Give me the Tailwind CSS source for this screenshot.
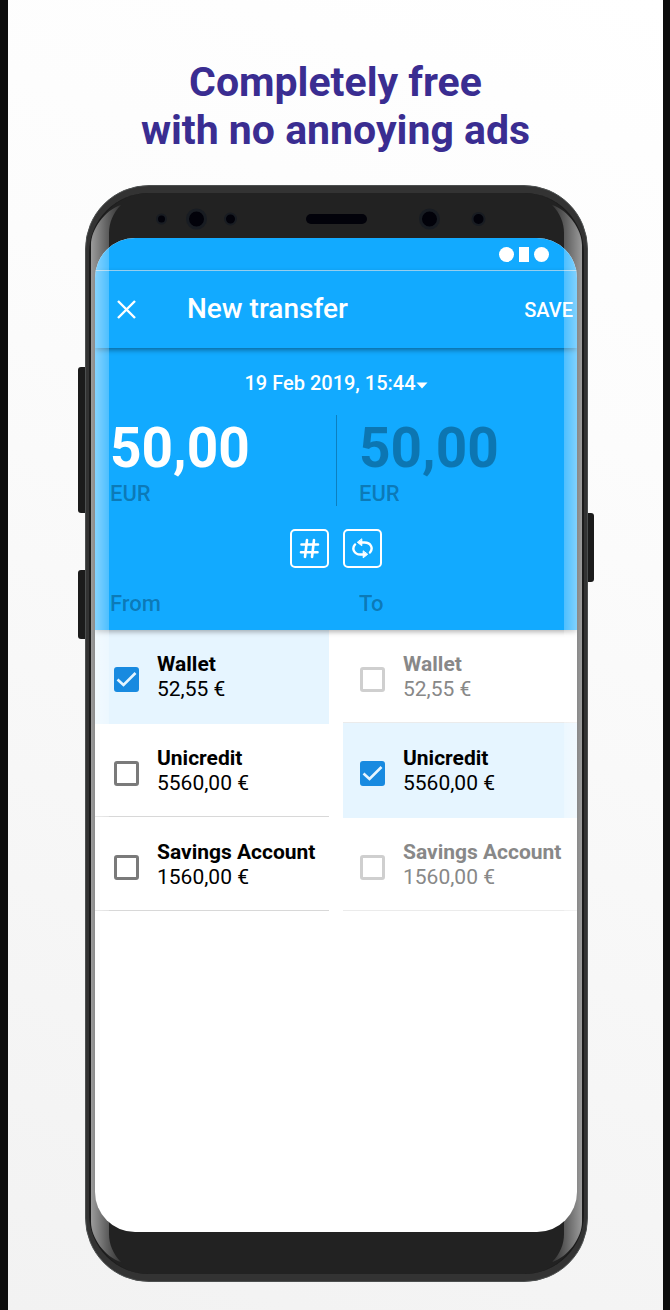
<!DOCTYPE html>
<html lang="en">
<head>
<meta charset="utf-8">
<meta name="viewport" content="width=device-width, initial-scale=1">
<title>New transfer</title>
<script src="https://cdn.jsdelivr.net/npm/@tailwindcss/browser@4"></script>
</head>
<body class="font-['Roboto',sans-serif] bg-[#0d0d0d]">
<main class="min-h-screen ml-2 mr-[7px] pt-[58px] pb-7 bg-[linear-gradient(200deg,#ffffff,#fcfcfc_30%,#f2f2f2)]">
  <h1 class="text-center text-[41px] leading-[48px] font-bold text-[#3a2d91]">Completely free<br>with no annoying ads</h1>

  <div class="relative ml-[77px] mr-[75px] mt-[31px]">
    <!-- side keys -->
    <span class="absolute -left-[7px] top-[182px] w-3 h-[146px] rounded-[3px] bg-[#1b1b1b]"></span>
    <span class="absolute -left-[7px] top-[385px] w-3 h-[69px] rounded-[3px] bg-[#1b1b1b]"></span>
    <span class="absolute -right-[6px] top-[328px] w-3 h-[69px] rounded-[3px] bg-[#1b1b1b]"></span>

    <div class="relative rounded-[64px] bg-[#333333] border border-[#4c4f4f] px-[3px] py-[7px]">
      <div class="rounded-[60px] bg-[#222222] border-x-2 border-[#1b1b1b] pl-1 pr-[5px] pb-[42px]">
        <!-- sensors -->
        <svg class="block w-full h-[45px]" viewBox="0 0 482 45" preserveAspectRatio="xMidYMin slice" aria-hidden="true">
          <g fill="#02020a" stroke="#181c22" stroke-width="2">
            <circle cx="66.500" cy="26" r="4.500"/><circle cx="101.500" cy="26" r="9" stroke-width="3"/><circle cx="135.500" cy="26" r="5.500"/>
            <circle cx="334.500" cy="26" r="9" stroke-width="3"/><circle cx="383.500" cy="26" r="6"/>
          </g>
          <rect x="211" y="21" width="61" height="10" rx="5" fill="#02020a"/>
        </svg>

        <div class="rounded-[40px] overflow-hidden bg-white min-h-[994px]">
          <div class="h-[33px] bg-[#12aaff] border-b border-white/60 flex items-center justify-end gap-[5px] pr-7">
            <span class="size-[15px] rounded-full bg-white"></span>
            <span class="w-[10px] h-[15px] bg-white"></span>
            <span class="size-[15px] rounded-full bg-white"></span>
          </div>
          <header class="relative z-10 h-[77px] bg-[#12aaff] shadow-[0_2px_5px_rgba(0,0,0,0.4)] flex items-center pl-[22px] pr-1 text-white">
            <button type="button" aria-label="Close" class="size-[19px]">
              <svg class="block size-full" viewBox="0 0 19 19" fill="none" stroke="currentColor" stroke-width="2.400"><path d="M1 1L18 18M18 1L1 18"/></svg>
            </button>
            <h2 class="ml-[51px] flex-1 pb-[2px] text-[28px] leading-8 font-medium">New transfer</h2>
            <button type="button" class="text-[20px] leading-6 font-medium">SAVE</button>
          </header>

          <section class="relative bg-[#12aaff] shadow-[0_2px_5px_rgba(0,0,0,0.3)] pt-[23px] pb-3">
            <button type="button" class="mx-auto flex items-center text-white text-[20px] leading-6 font-medium">19 Feb 2019, 15:44
              <svg class="w-3 h-[7px] mt-1" viewBox="0 0 12 7" aria-hidden="true"><path d="M0.500 0.500H11.500L6 6.500Z" fill="currentColor"/></svg>
            </button>
            <div class="mt-5 grid grid-cols-2">
              <label class="block h-[91px] pl-[15px]">
                <input type="text" value="50,00" aria-label="Amount to send" class="block w-full bg-transparent outline-none pt-[3px] text-[55px] leading-[60px] font-bold text-white">
                <span class="block pt-[2px] text-[22px] leading-[28px] font-medium text-black/30">EUR</span>
              </label>
              <label class="block h-[91px] pl-[22px] border-l border-black/25">
                <input type="text" value="50,00" aria-label="Amount to receive" class="block w-full bg-transparent outline-none pt-[3px] text-[55px] leading-[60px] font-bold text-black/30">
                <span class="block pt-[2px] text-[22px] leading-[28px] font-medium text-black/30">EUR</span>
              </label>
            </div>
            <div class="mt-[23px] flex justify-center gap-[14px] text-white">
              <button type="button" aria-label="Tags" class="size-[39px] rounded-[5px] border-2 border-white grid place-items-center">
                <svg class="size-[21px]" viewBox="0 0 21 21" fill="none" stroke="currentColor" stroke-width="2.600" stroke-linecap="round"><path d="M2.500 6.500H19M2 14.300H18.500M8 2L6 19M15 2L13 19"/></svg>
              </button>
              <button type="button" aria-label="Recurrence" class="size-[39px] rounded-[5px] border-2 border-white grid place-items-center">
                <svg class="size-[21px]" viewBox="0 0 21 21" fill="none" stroke="currentColor" stroke-width="2.400" stroke-linecap="round"><path d="M9 4.500H12.500C19 4.500 21.500 10.500 18 14.500"/><path d="M12 16.500H8.500C2 16.500 -0.500 10.500 3 6.500"/><path d="M9.800 1.200V7.800L5.600 4.500ZM11.200 13.200V19.800L15.400 16.500Z" fill="currentColor" stroke-width="1" stroke-linejoin="round"/></svg>
              </button>
            </div>
            <div class="mt-[22px] grid grid-cols-2 text-[22px] leading-7 font-medium text-black/30">
              <h3 class="pl-[15px]">From</h3>
              <h3 class="pl-[23px]">To</h3>
            </div>
          </section>

          <div class="grid grid-cols-2 gap-[14px] text-[21px] leading-[25px] text-black whitespace-nowrap">
            <div>
              <label class="flex items-start gap-[18px] h-[94px] pl-[19px] pt-[22px] bg-[#e6f5ff]">
                <span class="mt-[15px] grid"><input type="checkbox" checked class="peer col-start-1 row-start-1 appearance-none size-[25px] rounded-[3px] border-2 border-[#7a7a7a] checked:border-[#188ae0] checked:bg-[#188ae0]"><svg class="col-start-1 row-start-1 size-[25px] pointer-events-none hidden peer-checked:block" viewBox="0 0 25 25" fill="none" stroke="#e6f5ff" stroke-width="2.600"><path d="M3.500 12.500L9.500 18L21.500 6"/></svg></span>
                <span><b class="block font-bold">Wallet</b><span class="block">52,55 €</span></span>
              </label>
              <label class="flex items-start gap-[18px] h-[93px] pl-[19px] pt-[22px] border-b border-[#d8d8d8]">
                <span class="mt-[15px] grid"><input type="checkbox" class="appearance-none size-[25px] rounded-[3px] border-[3px] border-[#7a7a7a] checked:bg-[#188ae0]"></span>
                <span><b class="block font-bold">Unicredit</b><span class="block">5560,00 €</span></span>
              </label>
              <label class="flex items-start gap-[18px] h-[94px] pl-[19px] pt-[23px] border-b border-[#d8d8d8]">
                <span class="mt-[15px] grid"><input type="checkbox" class="appearance-none size-[25px] rounded-[3px] border-[3px] border-[#7a7a7a] checked:bg-[#188ae0]"></span>
                <span><b class="block font-bold">Savings Account</b><span class="block">1560,00 €</span></span>
              </label>
            </div>
            <div>
              <label class="flex items-start gap-[18px] h-[93px] pl-[17px] pt-[22px] border-b border-[#ebebeb] text-[#888888]">
                <span class="mt-[15px] grid"><input type="checkbox" class="appearance-none size-[25px] rounded-[3px] border-[3px] border-[#cfcfcf] checked:bg-[#188ae0]"></span>
                <span><b class="block font-bold">Wallet</b><span class="block">52,55 €</span></span>
              </label>
              <label class="flex items-start gap-[18px] h-[95px] pl-[17px] pt-[23px] bg-[#e6f5ff]">
                <span class="mt-[15px] grid"><input type="checkbox" checked class="peer col-start-1 row-start-1 appearance-none size-[25px] rounded-[3px] border-2 border-[#7a7a7a] checked:border-[#188ae0] checked:bg-[#188ae0]"><svg class="col-start-1 row-start-1 size-[25px] pointer-events-none hidden peer-checked:block" viewBox="0 0 25 25" fill="none" stroke="#e6f5ff" stroke-width="2.600"><path d="M3.500 12.500L9.500 18L21.500 6"/></svg></span>
                <span><b class="block font-bold">Unicredit</b><span class="block">5560,00 €</span></span>
              </label>
              <label class="flex items-start gap-[18px] h-[93px] pl-[17px] pt-[22px] border-b border-[#ebebeb] text-[#888888]">
                <span class="mt-[15px] grid"><input type="checkbox" class="appearance-none size-[25px] rounded-[3px] border-[3px] border-[#cfcfcf] checked:bg-[#188ae0]"></span>
                <span><b class="block font-bold">Savings Account</b><span class="block">1560,00 €</span></span>
              </label>
            </div>
          </div>
        </div>
      </div>

      <!-- glare along the curved glass edges -->
      <svg width="0" height="0" class="absolute" aria-hidden="true"><defs>
        <linearGradient id="glare" gradientUnits="userSpaceOnUse" x1="0" x2="30" y1="0" y2="0"><stop offset="0" stop-color="#fff" stop-opacity=".55"/><stop offset=".6" stop-color="#fff" stop-opacity=".25"/><stop offset="1" stop-color="#fff" stop-opacity=".08"/></linearGradient>
        <path id="corner" d="M0 40C0 24 14 5 30 0C22 8 18 18 18 28V40Z" fill="url(#glare)"/>
      </defs></svg>
      <div class="absolute inset-y-[19px] left-[5px] z-20 flex flex-col pointer-events-none" aria-hidden="true">
        <svg class="block w-[30px] h-10" viewBox="0 0 30 40"><use href="#corner"/></svg>
        <span class="flex-1 w-[18px] bg-linear-to-r from-white/55 to-white/25"></span>
        <svg class="block w-[30px] h-10 -scale-y-100" viewBox="0 0 30 40"><use href="#corner"/></svg>
      </div>
      <div class="absolute inset-y-[19px] right-[5px] z-20 flex flex-col items-end pointer-events-none" aria-hidden="true">
        <svg class="block w-[30px] h-10 -scale-x-100" viewBox="0 0 30 40"><use href="#corner"/></svg>
        <span class="flex-1 w-[18px] bg-linear-to-l from-white/55 to-white/25"></span>
        <svg class="block w-[30px] h-10 -scale-100" viewBox="0 0 30 40"><use href="#corner"/></svg>
      </div>
    </div>
  </div>
</main>
</body>
</html>
